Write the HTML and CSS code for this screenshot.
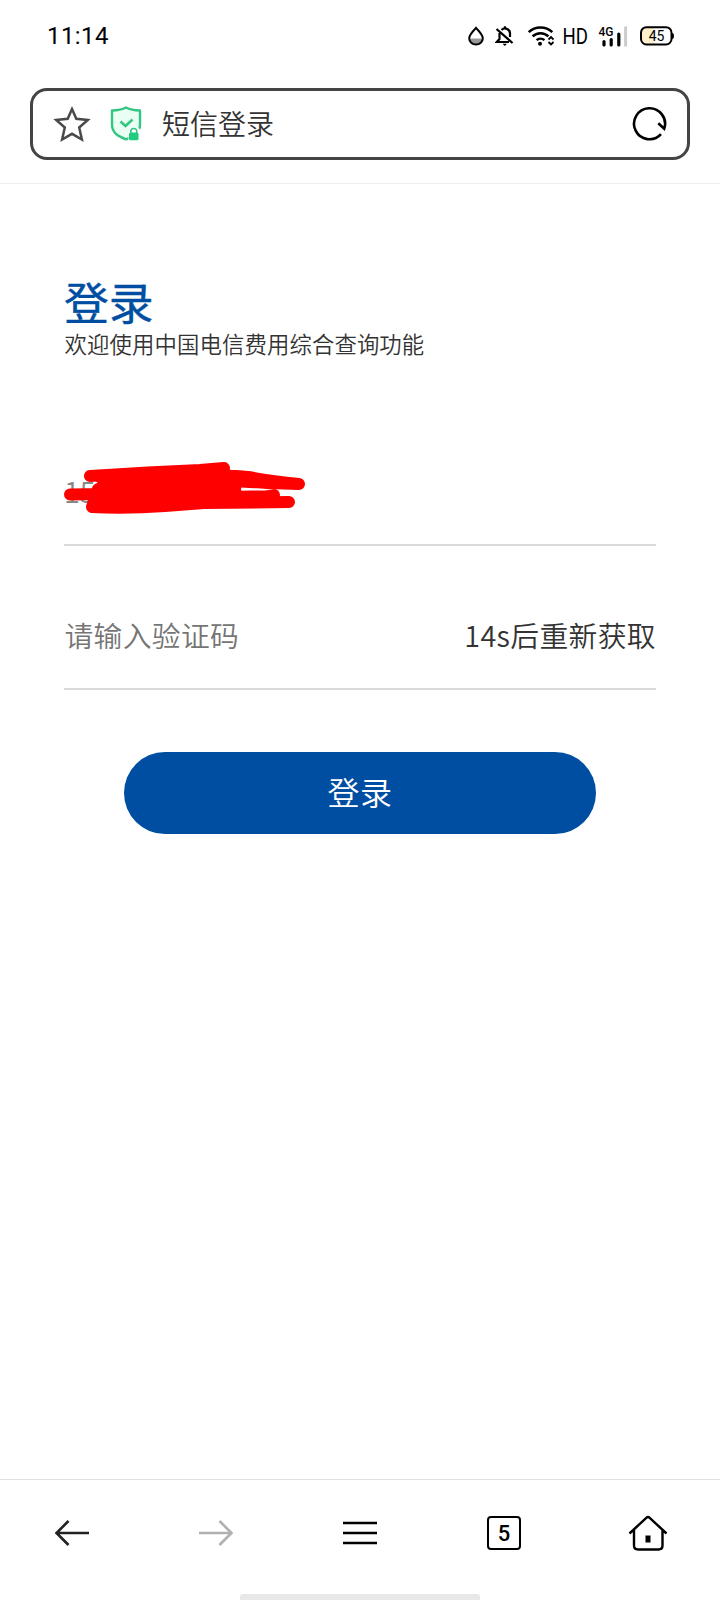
FILE: index.html
```html
<!DOCTYPE html>
<html lang="zh-CN">
<head>
<meta charset="utf-8">
<title>短信登录</title>
<link rel="stylesheet" href="styles.css">
</head>
<body>
<header class="status">
  <span class="time">11:14</span>
  <div class="status-icons">
    <svg class="ic-drop" width="18" height="20" viewBox="0 0 18 20"><path d="M3 12.500h12a6 5.500 0 0 1-12 0z" fill="#999"/><path d="M9 1.800C6.500 5 2.200 8.600 2.200 12.200a6.800 6.300 0 0 0 13.600 0C15.800 8.600 11.500 5 9 1.800z" fill="none" stroke="#000" stroke-width="2"/></svg>
    <svg class="ic-bell" width="20" height="22" viewBox="0 0 20 22"><path d="M4.500 8v6L1.800 17H14M6.500 5a5 5 0 0 1 8.500 4V12M10 1.300v2M1.500 4L17.500 18" fill="none" stroke="#000" stroke-width="2.200"/><path d="M7.500 18.800h4.500l-2.200 2.200z"/></svg>
    <svg class="ic-wifi" width="28" height="22" viewBox="0 0 28 22"><path d="M1.700 7.200a17 17 0 0 1 23.600 0M5.600 11.400a11.200 11.200 0 0 1 15.800 0M9.600 15.200a5.700 5.700 0 0 1 7.800 0" fill="none" stroke="#000" stroke-width="2.500"/><circle cx="13" cy="18.700" r="2"/><path d="M21.500 14.500l2.500-2.400 2.500 2.400M21.500 17l2.500 2.400 2.500-2.400" fill="none" stroke="#000" stroke-width="1.800"/></svg>
    <svg class="hd" width="30" height="32" viewBox="-2 -5 30 32"><text class="hd-text" x="-0.500" y="19" textLength="25.500" lengthAdjust="spacingAndGlyphs">HD</text></svg>
    <svg class="ic-signal" width="32" height="22" viewBox="0 0 32 22"><text class="net" x="0.500" y="10.500" textLength="15" lengthAdjust="spacingAndGlyphs">4G</text><path d="M6 16.500v3.500M13.200 14.500v5.500M20.800 9v11" stroke="#000" stroke-width="3.200" stroke-linecap="round"/><path d="M27.600 1.500v20" stroke="#ccc" stroke-width="3"/></svg>
    <svg class="ic-battery" width="34" height="20" viewBox="0 0 34 20"><path d="M7 2h7v16H7q-5 0-5-5V7q0-5 5-5z" fill="#fff0cf"/><rect x="1" y="1.200" width="30.500" height="17.300" rx="5.500" fill="none" stroke="#000" stroke-width="2"/><path d="M32 7q2 0 2 3t-2 3z"/><text class="pct" x="16.500" y="14.800" text-anchor="middle">45</text></svg>
  </div>
</header>
<div class="toolbar">
  <div class="address">
    <svg class="ic-star" width="38" height="38" viewBox="0 0 38 38"><path d="M19 4l4.300 9.800 11.500 1.200-8.600 7.500 2.700 12L19 28.800 9.100 34.500l2.700-12L3.200 15l11.500-1.200z" fill="none" stroke="#4a4a4a" stroke-width="2.500"/></svg>
    <svg class="ic-shield" width="34" height="38" viewBox="0 0 34 38"><path d="M17 2.500c4 2.200 9 2.900 14 3v14c0 9-7 11.500-14 14.800C10 31.500 3 28.500 3 19.500v-14c5-.1 10-.8 14-3z" fill="#e9fff4" stroke="#35c583" stroke-width="2.400" stroke-linejoin="round"/><path d="M11.500 16.500l5 4.500 7-6.500" fill="none" stroke="#35c583" stroke-width="2.500"/><path d="M19.500 27q0-3 3-4h7l3 3v10h-13z" fill="#fff"/><path d="M21.800 29v-2.500a3 3 0 0 1 6 0V29" fill="none" stroke="#35c583" stroke-width="1.500"/><rect x="20" y="27.500" width="9.500" height="7.800" rx="1.500" fill="#20cc80"/></svg>
    <span class="page-name">短信登录</span>
    <svg class="ic-reload" width="38" height="38" viewBox="0 0 38 38"><path d="M31 29.200A15.500 15.500 0 1 1 34.200 23.800L28.300 18.300" fill="none" stroke="#000" stroke-width="2.600"/></svg>
  </div>
</div>
<main class="content">
  <h1 class="title">登录</h1>
  <p class="subtitle">欢迎使用中国电信费用综合查询功能</p>
  <div class="field phone">
    <span class="number">15</span>
    <svg class="scribble" width="250" height="60" viewBox="60 455 250 60"><g fill="none" stroke="red" stroke-width="12" stroke-linecap="round" stroke-linejoin="round"><path d="M90 476Q150 472 200 470L224 468M180 476L236 476L248 477Q270 481 299 484L235 482M70 494.500L100 494M98 489L92 507Q125 509 165 506L204 503L289 502M230 497L274 495"/></g><path d="M90 476L225 468L250 476L241 486V491L274 495V503L204 508L92 509L88 492L98 483z" fill="red"/><path d="M241.500 487.500L273 489.500 265 490.500 242 490.500z" fill="#fff"/></svg>
  </div>
  <div class="field code">
    <span class="placeholder">请输入验证码</span>
    <span class="countdown">14s后重新获取</span>
  </div>
  <button class="submit">登录</button>
</main>
<nav class="bottom">
  <svg width="44" height="44" viewBox="0 0 44 44"><path d="M39 22H7M18.500 10L6.500 22l12 12" fill="none" stroke="#222" stroke-width="2.600"/></svg>
  <svg width="44" height="44" viewBox="0 0 44 44"><path d="M5 22h32M25.500 10l12 12-12 12" fill="none" stroke="#b0b0b0" stroke-width="2.600"/></svg>
  <svg width="44" height="44" viewBox="0 0 44 44"><path d="M5 12h34M5 22h34M5 32h34" fill="none" stroke="#000" stroke-width="2.400"/></svg>
  <span class="tabs">5</span>
  <svg width="44" height="44" viewBox="0 0 44 44"><path d="M3.500 22.500L20.300 6.800q1.700-1.500 3.400 0L40.500 22.500M8 19v15.500q0 4 4 4h20.500q4 0 4-4V19" fill="none" stroke="#000" stroke-width="2.400"/><path d="M19.500 24.500h5v7h-5z"/></svg>
</nav>
<div class="gesture"></div>
</body>
</html>
```
FILE: styles.css
```css
* { box-sizing: border-box; }
body {
  margin: 0;
  width: 720px;
  height: 1600px;
  display: flex;
  flex-direction: column;
  background: #fff;
  color: #333;
  font-family: "Noto Sans CJK SC", sans-serif;
  overflow: hidden;
}
svg { display: block; flex: none; }
.status {
  height: 72px;
  padding: 0 46px 0 47px;
  display: flex;
  align-items: center;
  justify-content: space-between;
  color: #000;
  font-family: Roboto, sans-serif;
}
.time { font-size: 24px; letter-spacing: 0.4px; }
.status-icons { display: flex; align-items: center; }
.ic-bell { margin-left: 10px; }
.ic-wifi { margin-left: 12px; }
.hd { margin-left: 6px; }
.hd-text { font: 22px Roboto, sans-serif; }
.ic-signal { margin-left: 7px; }
.ic-battery { margin-left: 10px; }
.net { font: 500 13px Roboto, sans-serif; }
.pct { font: 14px Roboto, sans-serif; }
.toolbar { height: 112px; padding: 16px 30px 0; border-bottom: 1px solid #eee; }
.address {
  height: 72px;
  border: 3px solid #444;
  border-radius: 17px;
  display: flex;
  align-items: center;
  padding: 0 19px 0 20px;
}
.ic-shield { margin-left: 18px; }
.page-name { margin-left: 19px; flex: 1; font-size: 28px; font-weight: 350; line-height: 40px; padding-bottom: 3px; }
.content { flex: 1; padding: 92px 64px 0; display: flex; flex-direction: column; }
.title { margin: 0; font-size: 44.8px; line-height: 50px; font-weight: 400; color: #004ea2; -webkit-text-stroke: 0.4px #004ea2; }
.subtitle { margin: 0; font-size: 22.4px; line-height: 34px; font-weight: 350; letter-spacing: 0.1px; padding-left: 0.5px; }
.field { border-bottom: 2px solid #d9d9d9; display: flex; justify-content: space-between; position: relative; font-size: 28.8px; line-height: 42px; font-weight: 350; }
.phone { margin-top: 110px; height: 76px; }
.number { color: #888; }
.scribble { position: absolute; left: -4px; top: -15px; }
.code { margin-top: 68px; height: 76px; }
.placeholder { color: #757575; letter-spacing: 0.3px; padding-left: 0.5px; }
.countdown { letter-spacing: 0.35px; }
.submit {
  margin: 62px 60px 0;
  height: 82px;
  border: 0;
  border-radius: 41px;
  background: #004ea2;
  color: #fff;
  font: 350 32px/78px "Noto Sans CJK SC", sans-serif;
  letter-spacing: 0.6px;
  padding: 0 0 4px;
}
.bottom { height: 115px; border-top: 1px solid #e0e0e0; padding-bottom: 9px; display: grid; grid-template-columns: repeat(5, 1fr); align-items: center; justify-items: center; }
.tabs { width: 34px; height: 34px; border: 2.500px solid #000; border-radius: 4px; font: 500 22px/31px Roboto, sans-serif; text-align: center; color: #000; }
.gesture { width: 240px; height: 6px; margin: 0 auto; border-radius: 3px 3px 0 0; background: #e8e8e8; }
```
